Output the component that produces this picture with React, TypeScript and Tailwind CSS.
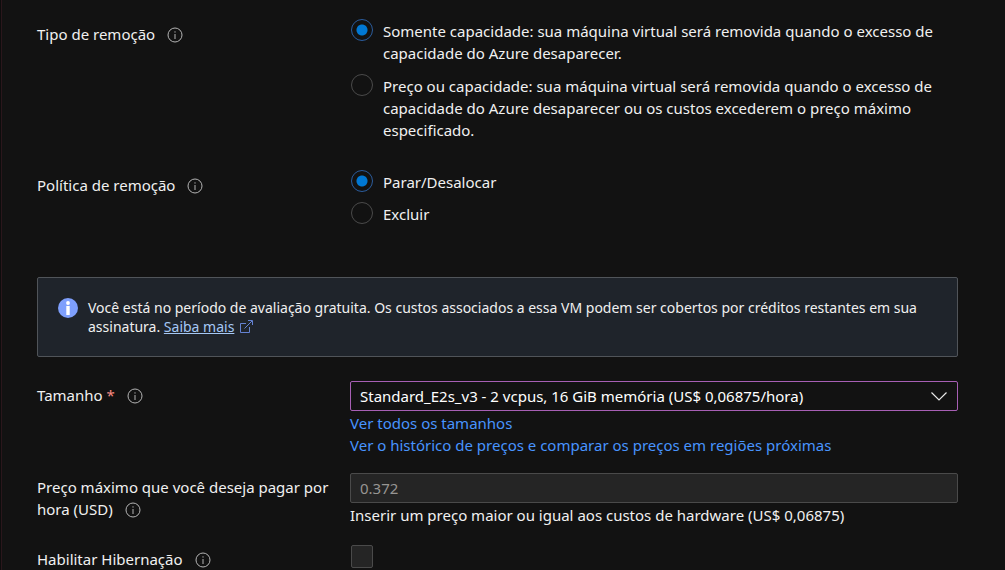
import type { ReactNode } from "react";

function InfoIcon() {
  return (
    <svg viewBox="0 0 16 16" className="h-4 w-4 shrink-0" fill="none" aria-hidden="true">
      <circle cx="8" cy="8" r="7" stroke="#b4b4b4" strokeWidth="1" />
      <path d="M8 7V12M8 4.3V5.6" stroke="#b4b4b4" strokeWidth="1" />
    </svg>
  );
}

function InfoButton({ about }: { about: string }) {
  return (
    <button type="button" aria-label={about} className="ml-3 inline-flex align-[-3px]">
      <InfoIcon />
    </button>
  );
}

function Row({ label, children }: { label: ReactNode; children: ReactNode }) {
  return (
    <div className="flex items-start">
      <div className="w-[313px] shrink-0 pt-[3px]">{label}</div>
      <div className="min-w-0 flex-1">{children}</div>
    </div>
  );
}

function Radio({ name, checked, children }: { name: string; checked?: boolean; children: ReactNode }) {
  return (
    <label className="flex items-start gap-2.5 pl-px">
      <input
        type="radio"
        name={name}
        defaultChecked={checked}
        className="-mt-px h-[22px] w-[22px] shrink-0 appearance-none rounded-full border border-[#4a4a4a] checked:border-[#2b5c9c] checked:bg-[radial-gradient(circle,#0078d4_5px,transparent_6px)]"
      />
      <span>{children}</span>
    </label>
  );
}

export default function App() {
  return (
    <main className="min-h-screen border-l border-[#0c0c0c] bg-[#121212] font-['Noto_Sans',sans-serif] text-[15px] leading-[22px] text-[#f0f0f0]">
      <form className="min-h-screen border-l border-[#2a161b] pt-5 pr-[47px] pl-[35px]">
        <Row
          label={
            <>
              <span id="eviction-type">Tipo de remoção</span>
              <InfoButton about="Informações sobre tipo de remoção" />
            </>
          }
        >
          <div role="radiogroup" aria-labelledby="eviction-type" className="flex flex-col gap-[11px]">
            <Radio name="type" checked>
              Somente capacidade: sua máquina virtual será removida quando o excesso de capacidade do Azure desaparecer.
            </Radio>
            <Radio name="type">
              Preço ou capacidade: sua máquina virtual será removida quando o excesso de capacidade do Azure desaparecer ou
              os custos excederem o preço máximo especificado.
            </Radio>
          </div>
        </Row>

        <div className="mt-[30px]">
          <Row
            label={
              <>
                <span id="eviction-policy">Política de remoção</span>
                <InfoButton about="Informações sobre política de remoção" />
              </>
            }
          >
            <div role="radiogroup" aria-labelledby="eviction-policy" className="flex flex-col gap-2.5">
              <Radio name="policy" checked>
                Parar/Desalocar
              </Radio>
              <Radio name="policy">Excluir</Radio>
            </div>
          </Row>
        </div>

        <div className="mt-[52px] flex items-start gap-2.5 rounded-xs border border-[#505459] bg-[#1f242b] px-5 pt-5 pb-5 text-[14px] leading-[19px]">
          <svg viewBox="0 0 20 20" className="h-5 w-5 shrink-0" aria-hidden="true">
            <circle cx="10" cy="10" r="10" fill="#7e9ffc" />
            <circle cx="10" cy="5" r="1.9" fill="#fff" />
            <rect x="8.3" y="8" width="3.4" height="9" fill="#fff" />
          </svg>
          <p className="min-w-0 flex-1">
            Você está no período de avaliação gratuita. Os custos associados a essa VM podem ser cobertos por créditos
            restantes em sua assinatura.{" "}
            <a href="#saiba-mais" className="text-[#a5c8f5] underline">
              Saiba mais
            </a>
            <svg
              viewBox="0 0 13 13"
              className="ml-1.5 inline h-[13px] w-[13px] align-[-1px]"
              fill="none"
              stroke="#6482d2"
              aria-hidden="true"
            >
              <path d="M6 3.5H.5V12.5H9.5V7M4.5 8.5L12 1M8 .5H12.5V5" />
            </svg>
          </p>
        </div>

        <div className="mt-6">
          <Row
            label={
              <>
                <label htmlFor="size">
                  Tamanho <span className="text-[#f88a82]">*</span>
                </label>
                <InfoButton about="Informações sobre tamanho" />
              </>
            }
          >
            <div className="grid items-center">
              <select
                id="size"
                className="col-start-1 row-start-1 h-[30px] w-full appearance-none rounded-xs border border-[#a75fb4] bg-[#121212] pr-10 pl-[9px] text-white"
              >
                <option>Standard_E2s_v3 - 2 vcpus, 16 GiB memória (US$ 0,06875/hora)</option>
              </select>
              <svg
                viewBox="0 0 16 9"
                className="pointer-events-none col-start-1 row-start-1 mr-[11px] h-[9px] w-4 justify-self-end"
                fill="none"
                stroke="#e8e8e8"
                strokeWidth="1.2"
                aria-hidden="true"
              >
                <path d="M.5 .5L8 8L15.5 .5" />
              </svg>
            </div>
            <div className="mt-px flex flex-col items-start text-[#4894fe]">
              <a href="#tamanhos">Ver todos os tamanhos</a>
              <a href="#historico">Ver o histórico de preços e comparar os preços em regiões próximas</a>
            </div>
          </Row>
        </div>

        <div className="mt-[17px]">
          <Row
            label={
              <>
                <label htmlFor="price">Preço máximo que você deseja pagar por hora (USD)</label>
                <InfoButton about="Informações sobre preço máximo" />
              </>
            }
          >
            <input
              id="price"
              type="text"
              disabled
              defaultValue="0.372"
              className="block h-[30px] w-full rounded-xs border border-[#4a4a4a] bg-[#252525] px-[9px] text-[#979593]"
            />
            <p className="mt-px">Inserir um preço maior ou igual aos custos de hardware (US$ 0,06875)</p>
          </Row>
        </div>

        <div className="mt-[19px]">
          <Row
            label={
              <div className="h-5">
                <label htmlFor="hibernate">Habilitar Hibernação</label>
                <InfoButton about="Informações sobre hibernação" />
              </div>
            }
          >
            <input
              id="hibernate"
              type="checkbox"
              className="ml-px block h-[23px] w-[22px] appearance-none rounded-xs border border-[#4a4a4a] bg-[#252525] checked:bg-[#0078d4]"
            />
          </Row>
        </div>
      </form>
    </main>
  );
}
